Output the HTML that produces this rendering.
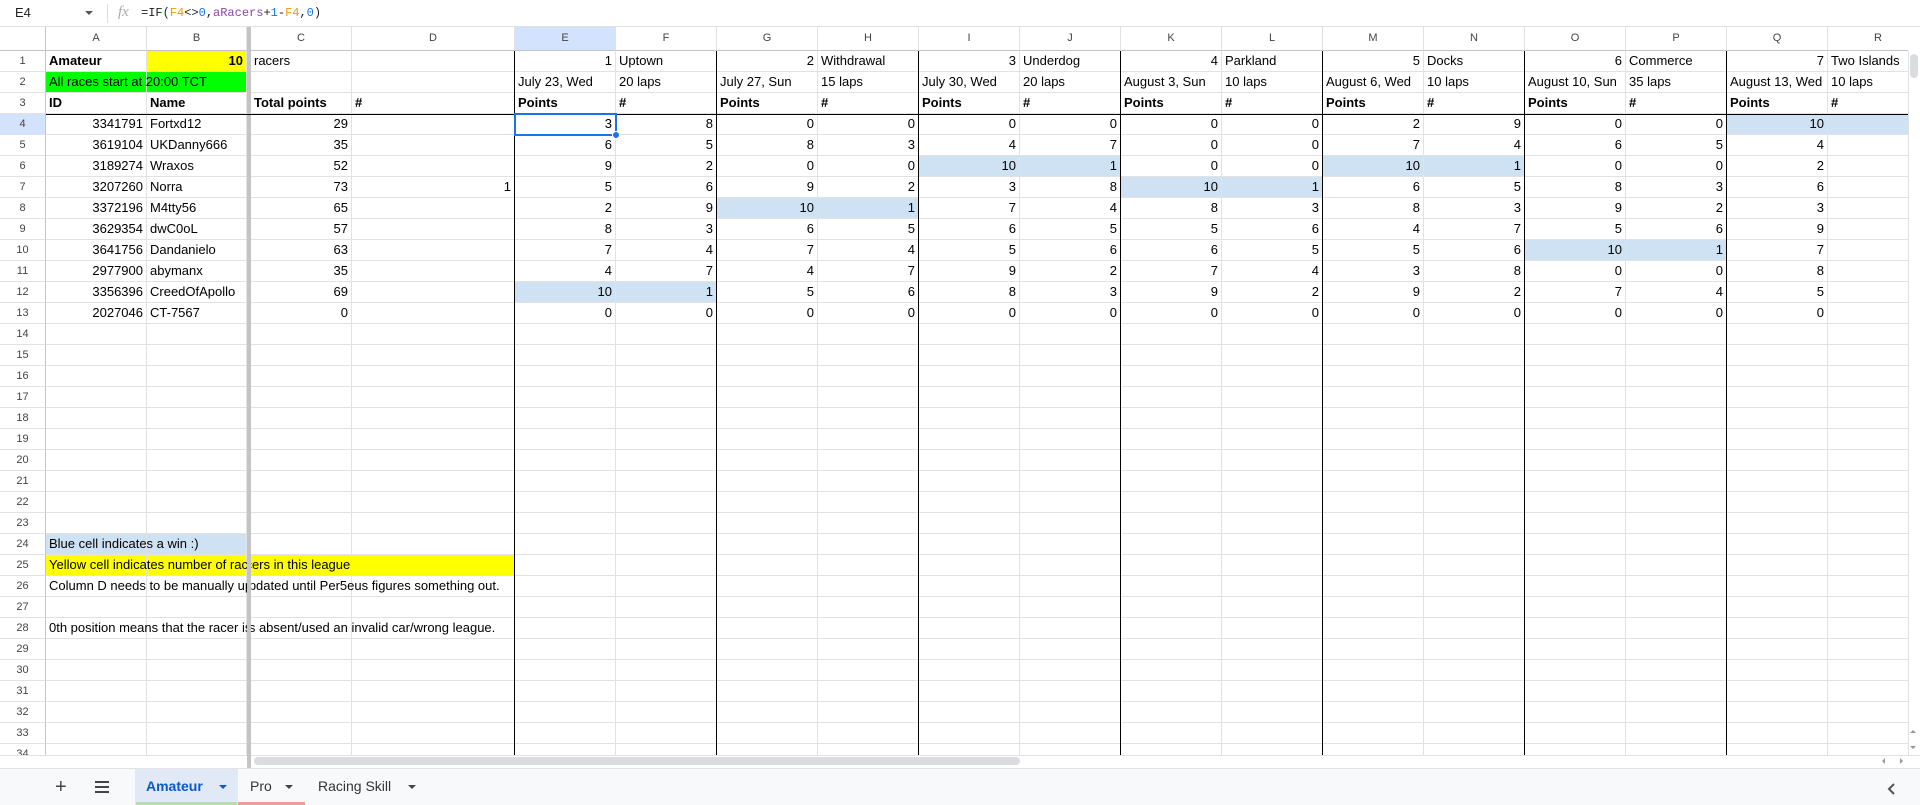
<!DOCTYPE html>
<html><head><meta charset="utf-8"><style>
*{box-sizing:border-box;margin:0;padding:0}
body{width:1920px;height:805px;overflow:hidden;background:#fff;font-family:"Liberation Sans",Arial,sans-serif;position:relative}
#fb{position:absolute;left:0;top:0;width:1920px;height:27px;border-bottom:1px solid #e1e1e1;font-size:13px}
#grid{position:absolute;left:0;top:27px;width:1908px;height:728px;overflow:hidden}
table{border-collapse:separate;border-spacing:0;table-layout:fixed;width:1929px}
td,th{height:21px;border-right:1px solid #e2e2e2;border-bottom:1px solid #e2e2e2;font-size:13px;line-height:20px;padding:0 3px;white-space:nowrap;overflow:hidden;color:#000;font-weight:normal;text-align:left;vertical-align:bottom}
th{text-align:center;font-size:11px;color:#444;padding:0;border-right:1px solid #c4c4c4;vertical-align:middle}
tr.h td{height:24px;text-align:center;font-size:11px;color:#444;border-bottom:1px solid #c4c4c4;vertical-align:middle;line-height:23px}
tr.h th{height:24px;border-bottom:1px solid #c4c4c4}
.r{text-align:right}.b{font-weight:bold}.bl{background:#cfe2f3}.y{background:#ffff00}.g{background:#00ff00}
.sel{background:#d3e3fd!important}
.dv{border-right:none;padding:0}
.ov{position:absolute}
.tx{position:absolute;left:49px;font-size:13px;line-height:20px;height:20px;white-space:nowrap;color:#000}
.cl{position:absolute;left:0;width:247px;height:20px;overflow:hidden}
.cr{position:absolute;left:251px;width:1000px;height:20px;overflow:hidden}
.cr .tx{left:-198px}
.cl .tx,.cr .tx{top:0}
</style></head><body>
<div id="fb">
<span style="position:absolute;left:15px;top:5px;font-size:13px;color:#222">E4</span>
<span style="position:absolute;left:85px;top:11px;width:0;height:0;border-left:4px solid transparent;border-right:4px solid transparent;border-top:4px solid #555"></span>
<span style="position:absolute;left:107px;top:4px;width:1px;height:19px;background:#ddd"></span>
<span style="position:absolute;left:118px;top:4px;font-family:'Liberation Serif',serif;font-style:italic;color:#aaa;font-size:15px">fx</span>
<span style="position:absolute;left:141px;top:6px;font-family:'Liberation Mono',monospace;font-size:12px;color:#222">=IF(<span style="color:#f29900">F4</span>&lt;&gt;<span style="color:#1a73e8">0</span>,<span style="color:#8e44ad">aRacers</span>+<span style="color:#1a73e8">1</span>-<span style="color:#f29900">F4</span>,<span style="color:#1a73e8">0</span>)</span>
</div>
<div id="grid"><table>
<colgroup><col style="width:46px"><col style="width:101px"><col style="width:100px"><col style="width:4px"><col style="width:101px"><col style="width:163px"><col span="14" style="width:101px"></colgroup>
<tr class="h"><th></th><td>A</td><td>B</td><td class="dv"></td><td>C</td><td>D</td><td class="sel">E</td><td>F</td><td>G</td><td>H</td><td>I</td><td>J</td><td>K</td><td>L</td><td>M</td><td>N</td><td>O</td><td>P</td><td>Q</td><td>R</td></tr>
<tr><th>1</th><td class="b">Amateur</td><td class="b r y">10</td><td class="dv"></td><td>racers</td><td></td><td class="r">1</td><td>Uptown</td><td class="r">2</td><td>Withdrawal</td><td class="r">3</td><td>Underdog</td><td class="r">4</td><td>Parkland</td><td class="r">5</td><td>Docks</td><td class="r">6</td><td>Commerce</td><td class="r">7</td><td>Two Islands</td></tr>
<tr><th>2</th><td class="g"></td><td class="g"></td><td class="dv"></td><td></td><td></td><td>July 23, Wed</td><td>20 laps</td><td>July 27, Sun</td><td>15 laps</td><td>July 30, Wed</td><td>20 laps</td><td>August 3, Sun</td><td>10 laps</td><td>August 6, Wed</td><td>10 laps</td><td>August 10, Sun</td><td>35 laps</td><td>August 13, Wed</td><td>10 laps</td></tr>
<tr><th>3</th><td class="b">ID</td><td class="b">Name</td><td class="dv"></td><td class="b">Total points</td><td class="b">#</td><td class="b">Points</td><td class="b">#</td><td class="b">Points</td><td class="b">#</td><td class="b">Points</td><td class="b">#</td><td class="b">Points</td><td class="b">#</td><td class="b">Points</td><td class="b">#</td><td class="b">Points</td><td class="b">#</td><td class="b">Points</td><td class="b">#</td></tr>
<tr><th class="sel">4</th><td class="r">3341791</td><td>Fortxd12</td><td class="dv"></td><td class="r">29</td><td></td><td class="r">3</td><td class="r">8</td><td class="r">0</td><td class="r">0</td><td class="r">0</td><td class="r">0</td><td class="r">0</td><td class="r">0</td><td class="r">2</td><td class="r">9</td><td class="r">0</td><td class="r">0</td><td class="r bl">10</td><td class="bl"></td></tr>
<tr><th>5</th><td class="r">3619104</td><td>UKDanny666</td><td class="dv"></td><td class="r">35</td><td></td><td class="r">6</td><td class="r">5</td><td class="r">8</td><td class="r">3</td><td class="r">4</td><td class="r">7</td><td class="r">0</td><td class="r">0</td><td class="r">7</td><td class="r">4</td><td class="r">6</td><td class="r">5</td><td class="r">4</td><td></td></tr>
<tr><th>6</th><td class="r">3189274</td><td>Wraxos</td><td class="dv"></td><td class="r">52</td><td></td><td class="r">9</td><td class="r">2</td><td class="r">0</td><td class="r">0</td><td class="r bl">10</td><td class="r bl">1</td><td class="r">0</td><td class="r">0</td><td class="r bl">10</td><td class="r bl">1</td><td class="r">0</td><td class="r">0</td><td class="r">2</td><td></td></tr>
<tr><th>7</th><td class="r">3207260</td><td>Norra</td><td class="dv"></td><td class="r">73</td><td class="r">1</td><td class="r">5</td><td class="r">6</td><td class="r">9</td><td class="r">2</td><td class="r">3</td><td class="r">8</td><td class="r bl">10</td><td class="r bl">1</td><td class="r">6</td><td class="r">5</td><td class="r">8</td><td class="r">3</td><td class="r">6</td><td></td></tr>
<tr><th>8</th><td class="r">3372196</td><td>M4tty56</td><td class="dv"></td><td class="r">65</td><td></td><td class="r">2</td><td class="r">9</td><td class="r bl">10</td><td class="r bl">1</td><td class="r">7</td><td class="r">4</td><td class="r">8</td><td class="r">3</td><td class="r">8</td><td class="r">3</td><td class="r">9</td><td class="r">2</td><td class="r">3</td><td></td></tr>
<tr><th>9</th><td class="r">3629354</td><td>dwC0oL</td><td class="dv"></td><td class="r">57</td><td></td><td class="r">8</td><td class="r">3</td><td class="r">6</td><td class="r">5</td><td class="r">6</td><td class="r">5</td><td class="r">5</td><td class="r">6</td><td class="r">4</td><td class="r">7</td><td class="r">5</td><td class="r">6</td><td class="r">9</td><td></td></tr>
<tr><th>10</th><td class="r">3641756</td><td>Dandanielo</td><td class="dv"></td><td class="r">63</td><td></td><td class="r">7</td><td class="r">4</td><td class="r">7</td><td class="r">4</td><td class="r">5</td><td class="r">6</td><td class="r">6</td><td class="r">5</td><td class="r">5</td><td class="r">6</td><td class="r bl">10</td><td class="r bl">1</td><td class="r">7</td><td></td></tr>
<tr><th>11</th><td class="r">2977900</td><td>abymanx</td><td class="dv"></td><td class="r">35</td><td></td><td class="r">4</td><td class="r">7</td><td class="r">4</td><td class="r">7</td><td class="r">9</td><td class="r">2</td><td class="r">7</td><td class="r">4</td><td class="r">3</td><td class="r">8</td><td class="r">0</td><td class="r">0</td><td class="r">8</td><td></td></tr>
<tr><th>12</th><td class="r">3356396</td><td>CreedOfApollo</td><td class="dv"></td><td class="r">69</td><td></td><td class="r bl">10</td><td class="r bl">1</td><td class="r">5</td><td class="r">6</td><td class="r">8</td><td class="r">3</td><td class="r">9</td><td class="r">2</td><td class="r">9</td><td class="r">2</td><td class="r">7</td><td class="r">4</td><td class="r">5</td><td></td></tr>
<tr><th>13</th><td class="r">2027046</td><td>CT-7567</td><td class="dv"></td><td class="r">0</td><td></td><td class="r">0</td><td class="r">0</td><td class="r">0</td><td class="r">0</td><td class="r">0</td><td class="r">0</td><td class="r">0</td><td class="r">0</td><td class="r">0</td><td class="r">0</td><td class="r">0</td><td class="r">0</td><td class="r">0</td><td></td></tr>
<tr><th>14</th><td></td><td></td><td class="dv"></td><td></td><td></td><td></td><td></td><td></td><td></td><td></td><td></td><td></td><td></td><td></td><td></td><td></td><td></td><td></td><td></td></tr>
<tr><th>15</th><td></td><td></td><td class="dv"></td><td></td><td></td><td></td><td></td><td></td><td></td><td></td><td></td><td></td><td></td><td></td><td></td><td></td><td></td><td></td><td></td></tr>
<tr><th>16</th><td></td><td></td><td class="dv"></td><td></td><td></td><td></td><td></td><td></td><td></td><td></td><td></td><td></td><td></td><td></td><td></td><td></td><td></td><td></td><td></td></tr>
<tr><th>17</th><td></td><td></td><td class="dv"></td><td></td><td></td><td></td><td></td><td></td><td></td><td></td><td></td><td></td><td></td><td></td><td></td><td></td><td></td><td></td><td></td></tr>
<tr><th>18</th><td></td><td></td><td class="dv"></td><td></td><td></td><td></td><td></td><td></td><td></td><td></td><td></td><td></td><td></td><td></td><td></td><td></td><td></td><td></td><td></td></tr>
<tr><th>19</th><td></td><td></td><td class="dv"></td><td></td><td></td><td></td><td></td><td></td><td></td><td></td><td></td><td></td><td></td><td></td><td></td><td></td><td></td><td></td><td></td></tr>
<tr><th>20</th><td></td><td></td><td class="dv"></td><td></td><td></td><td></td><td></td><td></td><td></td><td></td><td></td><td></td><td></td><td></td><td></td><td></td><td></td><td></td><td></td></tr>
<tr><th>21</th><td></td><td></td><td class="dv"></td><td></td><td></td><td></td><td></td><td></td><td></td><td></td><td></td><td></td><td></td><td></td><td></td><td></td><td></td><td></td><td></td></tr>
<tr><th>22</th><td></td><td></td><td class="dv"></td><td></td><td></td><td></td><td></td><td></td><td></td><td></td><td></td><td></td><td></td><td></td><td></td><td></td><td></td><td></td><td></td></tr>
<tr><th>23</th><td></td><td></td><td class="dv"></td><td></td><td></td><td></td><td></td><td></td><td></td><td></td><td></td><td></td><td></td><td></td><td></td><td></td><td></td><td></td><td></td></tr>
<tr><th>24</th><td class="bl"></td><td class="bl"></td><td class="dv"></td><td></td><td></td><td></td><td></td><td></td><td></td><td></td><td></td><td></td><td></td><td></td><td></td><td></td><td></td><td></td><td></td></tr>
<tr><th>25</th><td class="y"></td><td class="y"></td><td class="dv y"></td><td class="y"></td><td class="y"></td><td></td><td></td><td></td><td></td><td></td><td></td><td></td><td></td><td></td><td></td><td></td><td></td><td></td><td></td></tr>
<tr><th>26</th><td></td><td></td><td class="dv"></td><td></td><td></td><td></td><td></td><td></td><td></td><td></td><td></td><td></td><td></td><td></td><td></td><td></td><td></td><td></td><td></td></tr>
<tr><th>27</th><td></td><td></td><td class="dv"></td><td></td><td></td><td></td><td></td><td></td><td></td><td></td><td></td><td></td><td></td><td></td><td></td><td></td><td></td><td></td><td></td></tr>
<tr><th>28</th><td></td><td></td><td class="dv"></td><td></td><td></td><td></td><td></td><td></td><td></td><td></td><td></td><td></td><td></td><td></td><td></td><td></td><td></td><td></td><td></td></tr>
<tr><th>29</th><td></td><td></td><td class="dv"></td><td></td><td></td><td></td><td></td><td></td><td></td><td></td><td></td><td></td><td></td><td></td><td></td><td></td><td></td><td></td><td></td></tr>
<tr><th>30</th><td></td><td></td><td class="dv"></td><td></td><td></td><td></td><td></td><td></td><td></td><td></td><td></td><td></td><td></td><td></td><td></td><td></td><td></td><td></td><td></td></tr>
<tr><th>31</th><td></td><td></td><td class="dv"></td><td></td><td></td><td></td><td></td><td></td><td></td><td></td><td></td><td></td><td></td><td></td><td></td><td></td><td></td><td></td><td></td></tr>
<tr><th>32</th><td></td><td></td><td class="dv"></td><td></td><td></td><td></td><td></td><td></td><td></td><td></td><td></td><td></td><td></td><td></td><td></td><td></td><td></td><td></td><td></td></tr>
<tr><th>33</th><td></td><td></td><td class="dv"></td><td></td><td></td><td></td><td></td><td></td><td></td><td></td><td></td><td></td><td></td><td></td><td></td><td></td><td></td><td></td><td></td></tr>
<tr><th>34</th><td></td><td></td><td class="dv"></td><td></td><td></td><td></td><td></td><td></td><td></td><td></td><td></td><td></td><td></td><td></td><td></td><td></td><td></td><td></td><td></td></tr>
</table></div>
<!-- overflow text -->
<div class="tx" style="top:72px">All races start at 20:00 TCT</div>
<div class="tx" style="top:534px">Blue cell indicates a win :)</div>
<div class="cl" style="top:555px"><div class="tx">Yellow cell indicates number of racers in this league</div></div>
<div class="cr" style="top:555px"><div class="tx">Yellow cell indicates number of racers in this league</div></div>
<div class="cl" style="top:576px"><div class="tx">Column D needs to be manually updated until Per5eus figures something out.</div></div>
<div class="cr" style="top:576px"><div class="tx">Column D needs to be manually updated until Per5eus figures something out.</div></div>
<div class="cl" style="top:618px"><div class="tx">0th position means that the racer is absent/used an invalid car/wrong league.</div></div>
<div class="cr" style="top:618px"><div class="tx">0th position means that the racer is absent/used an invalid car/wrong league.</div></div>
<!-- divider -->
<div class="ov" style="left:247px;top:27px;width:4px;height:741px;background:#c4c4c4"></div>
<!-- black lines -->
<div class="ov" style="left:46px;top:114px;width:1862px;height:1px;background:#000"></div>
<div class="ov" style="left:514px;top:51px;width:1px;height:704px;background:#000"></div>
<div class="ov" style="left:716px;top:51px;width:1px;height:704px;background:#000"></div>
<div class="ov" style="left:918px;top:51px;width:1px;height:704px;background:#000"></div>
<div class="ov" style="left:1120px;top:51px;width:1px;height:704px;background:#000"></div>
<div class="ov" style="left:1322px;top:51px;width:1px;height:704px;background:#000"></div>
<div class="ov" style="left:1524px;top:51px;width:1px;height:704px;background:#000"></div>
<div class="ov" style="left:1726px;top:51px;width:1px;height:704px;background:#000"></div>
<!-- selection -->
<div class="ov" style="left:514px;top:113px;width:103px;height:23px;border:2px solid #1a73e8"></div>
<div class="ov" style="left:612px;top:131px;width:8px;height:8px;border-radius:50%;background:#1a73e8;border:1px solid #fff"></div>
<!-- vertical scrollbar -->
<div class="ov" style="left:1908px;top:51px;width:12px;height:704px;background:#fff;border-left:1px solid #e2e2e2"></div>
<div class="ov" style="left:1910px;top:54px;width:8px;height:24px;border-radius:4px;background:#dadce0"></div>
<div class="ov" style="left:1910px;top:730px;width:0;height:0;border-left:3px solid transparent;border-right:3px solid transparent;border-bottom:3px solid #999"></div>
<div class="ov" style="left:1910px;top:746px;width:0;height:0;border-left:3px solid transparent;border-right:3px solid transparent;border-top:3px solid #999"></div>
<!-- horizontal scrollbar -->
<div class="ov" style="left:0;top:755px;width:1920px;height:13px;background:#fff;border-top:1px solid #e2e2e2"></div>
<div class="ov" style="left:247px;top:755px;width:4px;height:13px;background:#c4c4c4"></div>
<div class="ov" style="left:254px;top:757px;width:766px;height:8px;border-radius:4px;background:#dadce0"></div>
<div class="ov" style="left:1882px;top:758px;width:0;height:0;border-top:3px solid transparent;border-bottom:3px solid transparent;border-right:3px solid #999"></div>
<div class="ov" style="left:1900px;top:758px;width:0;height:0;border-top:3px solid transparent;border-bottom:3px solid transparent;border-left:3px solid #999"></div>
<!-- tab bar -->
<div class="ov" style="left:0;top:768px;width:1920px;height:37px;background:#f8f9fa;border-top:1px solid #e2e2e2"></div>
<div class="ov" style="left:55px;top:776px;font-size:20px;color:#444">+</div>
<div class="ov" style="left:95px;top:781px;width:14px;height:2px;background:#444;box-shadow:0 5px 0 #444,0 10px 0 #444"></div>
<div class="ov" style="left:135px;top:769px;width:103px;height:36px;background:#e1e9f7"></div>
<div class="ov" style="left:136px;top:802px;width:101px;height:3px;background:#b7dcb0"></div>
<div class="ov" style="left:146px;top:778px;font-size:14px;font-weight:bold;color:#0b57d0">Amateur</div>
<div class="ov" style="left:219px;top:785px;border-left:4px solid transparent;border-right:4px solid transparent;border-top:4px solid #0b57d0"></div>
<div class="ov" style="left:238px;top:802px;width:67px;height:3px;background:#ee9c96"></div>
<div class="ov" style="left:250px;top:778px;font-size:14px;color:#333">Pro</div>
<div class="ov" style="left:285px;top:785px;border-left:4px solid transparent;border-right:4px solid transparent;border-top:4px solid #444"></div>
<div class="ov" style="left:318px;top:778px;font-size:14px;color:#333">Racing Skill</div>
<div class="ov" style="left:408px;top:785px;border-left:4px solid transparent;border-right:4px solid transparent;border-top:4px solid #444"></div>
<svg class="ov" style="left:1886px;top:782px" width="12" height="14" viewBox="0 0 12 14"><path d="M8 2 L3 7 L8 12" fill="none" stroke="#555" stroke-width="2"/></svg>
</body></html>
